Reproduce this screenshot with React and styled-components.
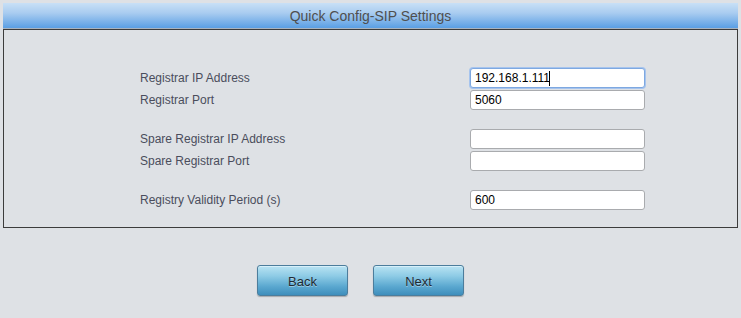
import React from "react";
import styled, { createGlobalStyle } from "styled-components";

const Global = createGlobalStyle`
  html, body { margin: 0; padding: 0; background: #dee1e5; }
  body { font-family: "Liberation Sans", Arial, sans-serif; }
`;

const Page = styled.div`
  width: 741px;
  height: 318px;
  padding: 3px 3px 0 3px;
  box-sizing: border-box;
`;

const Header = styled.div`
  height: 25px;
  background: linear-gradient(#c8e0f6 0%, #a9ccf0 40%, #5a9fe4 100%);
  color: #4f4f4f;
  font-size: 14px;
  display: flex;
  align-items: center;
  justify-content: center;
  border-bottom: 1px solid #a8b4c0;
`;

const Body = styled.div`
  border: 1px solid #3c3c3c;
  height: 199px;
  box-sizing: border-box;
  padding: 38px 0 0 136px;
`;

const Group = styled.div`
  display: flex;
  flex-direction: column;
  gap: 2px;
  margin-bottom: 19px;
`;

const Row = styled.div`
  display: grid;
  grid-template-columns: 330px 175px;
  align-items: center;
  height: 20px;
`;

const Label = styled.span`
  font-size: 12px;
  color: #4a4d5c;
`;

const Field = styled.div`
  position: relative;
  width: 175px;
  height: 20px;
`;

const Input = styled.input`
  box-sizing: border-box;
  width: 175px;
  height: 20px;
  border: 1px solid ${(p) => (p.$focused ? "#7ea8e0" : "#a9abae")};
  box-shadow: ${(p) => (p.$focused ? "0 0 0 1px #a6c4ee" : "none")};
  border-radius: 3px;
  background: #fff;
  padding: 0 4px;
  font-family: "Liberation Sans", Arial, sans-serif;
  font-size: 12px;
  color: #000;
  outline: none;
`;

const Caret = styled.span`
  position: absolute;
  left: 79px;
  top: 3px;
  width: 1px;
  height: 15px;
  background: #000;
`;

const Buttons = styled.div`
  display: flex;
  gap: 25px;
  padding: 37px 0 0 254px;
`;

const Button = styled.button`
  width: 91px;
  height: 31px;
  padding-top: 2px;
  border: 1px solid #4c7d9c;
  border-radius: 3px;
  background: linear-gradient(#b9e3f3 0%, #8dcbe5 35%, #5ba8d0 70%, #3e8ebc 100%);
  box-shadow: inset 0 1px 0 #d6f0fa, 0 1px 1px rgba(0, 0, 0, 0.25);
  font-family: "Liberation Sans", Arial, sans-serif;
  font-size: 13px;
  color: #1f2a33;
  text-shadow: 0 1px 0 rgba(255, 255, 255, 0.4);
  cursor: pointer;
`;

const groups = [
  [
    ["Registrar IP Address", "192.168.1.111", true],
    ["Registrar Port", "5060"],
  ],
  [
    ["Spare Registrar IP Address", ""],
    ["Spare Registrar Port", ""],
  ],
  [["Registry Validity Period (s)", "600"]],
];

export default function App() {
  return (
    <Page>
      <Global />
      <Header>Quick Config-SIP Settings</Header>
      <Body>
        {groups.map((g, i) => (
          <Group key={i}>
            {g.map(([label, value, focused]) => (
              <Row key={label}>
                <Label>{label}</Label>
                <Field>
                  <Input $focused={focused} defaultValue={value} readOnly />
                  {focused && <Caret />}
                </Field>
              </Row>
            ))}
          </Group>
        ))}
      </Body>
      <Buttons>
        <Button>Back</Button>
        <Button>Next</Button>
      </Buttons>
    </Page>
  );
}
